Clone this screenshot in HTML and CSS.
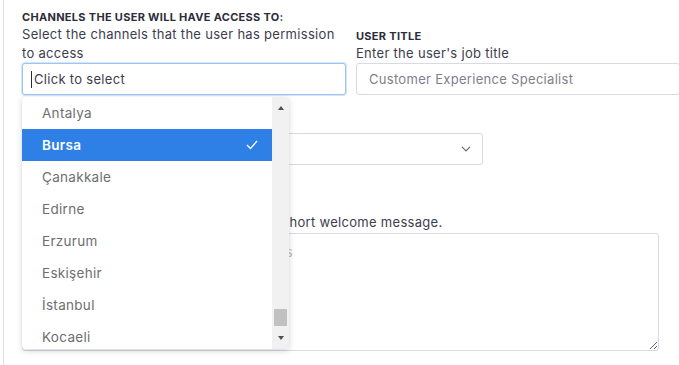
FILE: index.html
```html
<!DOCTYPE html>
<html>
<head>
<meta charset="utf-8">
<link rel="stylesheet" href="styles.css">
</head>
<body>
<div class="page">
  <div class="row1">
    <div class="field channels">
      <div class="label">CHANNELS THE USER WILL HAVE ACCESS TO:</div>
      <div class="desc">Select the channels that the user has permission to access</div>
      <div class="input focus"><span class="caret"></span>Click to select</div>
      <div class="dropdown">
        <ul class="options">
          <li>Antalya</li>
          <li class="selected">Bursa
            <svg class="check" width="12" height="10" viewBox="0 0 12 10"><polyline points="1,5 4.5,8.5 11,1" fill="none" stroke="#fff" stroke-width="1.3"/></svg>
          </li>
          <li>Çanakkale</li>
          <li>Edirne</li>
          <li>Erzurum</li>
          <li>Eskişehir</li>
          <li>İstanbul</li>
          <li>Kocaeli</li>
        </ul>
        <div class="scrollbar">
          <div class="arrow up"></div>
          <div class="track"><div class="thumb"></div></div>
          <div class="arrow down"></div>
        </div>
      </div>
    </div>
    <div class="field title">
      <div class="label">USER TITLE</div>
      <div class="desc">Enter the user's job title</div>
      <input class="input" type="text" placeholder="Customer Experience Specialist">
    </div>
  </div>

  <div class="field default">
    <div class="label">DEFAULT CHANNEL</div>
    <div class="select">
      <span class="select-text">Choose a channel</span>
      <svg class="chevron" width="10" height="6" viewBox="0 0 10 6"><polyline points="1,0.8 5,5 9,0.8" fill="none" stroke="#6b6b7d" stroke-width="1.2"/></svg>
    </div>
  </div>

  <div class="field welcome">
    <div class="label">WELCOME MESSAGE</div>
    <div class="desc">Personalize your invitation e-mail with a short welcome message.</div>
    <textarea class="textarea" placeholder="Type a welcome message for new users"></textarea>
  </div>
</div>
</body>
</html>
```

FILE: styles.css
```css
* { box-sizing: border-box; }
html, body { margin: 0; padding: 0; background: #fff; }
body {
  font-family: "Inter", "Open Sans", sans-serif;
  color: #3a3a4a;
  overflow: hidden;
  width: 679px;
  height: 365px;
}
.page {
  margin-left: 3px;
  border-left: 1px solid #dedde8;
  height: 365px;
  padding: 10px 0 0 18px;
}
.row1 {
  display: grid;
  grid-template-columns: 324px 324px;
  column-gap: 10px;
  align-items: end;
}
.field { position: relative; }
.label {
  font-size: 11px;
  font-weight: 700;
  line-height: 14px;
  color: #2c2c3a;
  letter-spacing: 0.3px;
}
.desc {
  margin-top: 1px;
  font-size: 13px;
  line-height: 19px;
  letter-spacing: 0.3px;
  color: #3d3d4d;
}
.channels .desc { padding-right: 8px; }
.input {
  display: flex;
  align-items: center;
  width: 324px;
  height: 32px;
  border: 1px solid #d9d9e6;
  border-radius: 3px;
  padding: 0 12px;
  font-family: inherit;
  font-size: 13px;
  letter-spacing: 0.3px;
  color: #3d3d4d;
  background: #fff;
  outline: none;
}
.input::placeholder { color: #80808c; }
.input.focus {
  border-color: #9cc6f2;
  box-shadow: 0 0 0 1px #d3e6fb;
  padding-left: 8px;
  color: #3d3d4d;
}
.caret {
  display: inline-block;
  width: 1px;
  height: 17px;
  background: #2a2a3a;
  margin-right: 2px;
}
.dropdown {
  position: absolute;
  left: 0;
  top: calc(100% + 2px);
  width: 267px;
  height: 252px;
  background: #fff;
  border-radius: 3px;
  box-shadow: 0 2px 6px rgba(0, 0, 0, 0.16), 0 0 1px rgba(0, 0, 0, 0.08);
  display: flex;
  overflow: hidden;
  z-index: 5;
}
.options {
  list-style: none;
  margin: 0;
  padding: 0;
  flex: 1;
}
.options li {
  height: 32px;
  display: flex;
  align-items: center;
  justify-content: space-between;
  padding: 0 14px 0 20px;
  font-size: 13.5px;
  letter-spacing: 0.3px;
  color: #6e6e72;
}
.options li.selected {
  background: #2e80e6;
  color: #fff;
  font-weight: 600;
}
.check { display: block; }
.scrollbar {
  width: 17px;
  background: #f1f1f1;
  display: flex;
  flex-direction: column;
  align-items: center;
}
.arrow {
  width: 0;
  height: 0;
  border-left: 3.5px solid transparent;
  border-right: 3.5px solid transparent;
}
.arrow.up {
  border-bottom: 4px solid #505050;
  margin-top: 9px;
}
.arrow.down {
  border-top: 4px solid #505050;
  margin-bottom: 9px;
}
.track {
  flex: 1;
  width: 100%;
  display: flex;
  flex-direction: column;
  justify-content: flex-end;
  align-items: center;
  padding-bottom: 10px;
}
.thumb {
  width: 13px;
  height: 17px;
  background: #c1c1c1;
}
.default { margin-top: 16px; }
.select {
  margin-top: 8px;
  width: 461px;
  height: 32px;
  border: 1px solid #d9d9e6;
  border-radius: 3px;
  display: flex;
  align-items: center;
  justify-content: space-between;
  padding: 0 11px 0 12px;
  font-size: 13px;
  color: #80808c;
}
.chevron { display: block; }
.welcome { margin-top: 33px; }
.textarea {
  display: block;
  margin-top: 1px;
  width: 637px;
  height: 118px;
  border: 1px solid #d9d9e6;
  border-radius: 3px;
  padding: 10px 12px;
  font-family: inherit;
  font-size: 13px;
  letter-spacing: 0.3px;
  color: #3d3d4d;
  resize: both;
  outline: none;
}
.textarea::placeholder { color: #b9b9c2; }
```
